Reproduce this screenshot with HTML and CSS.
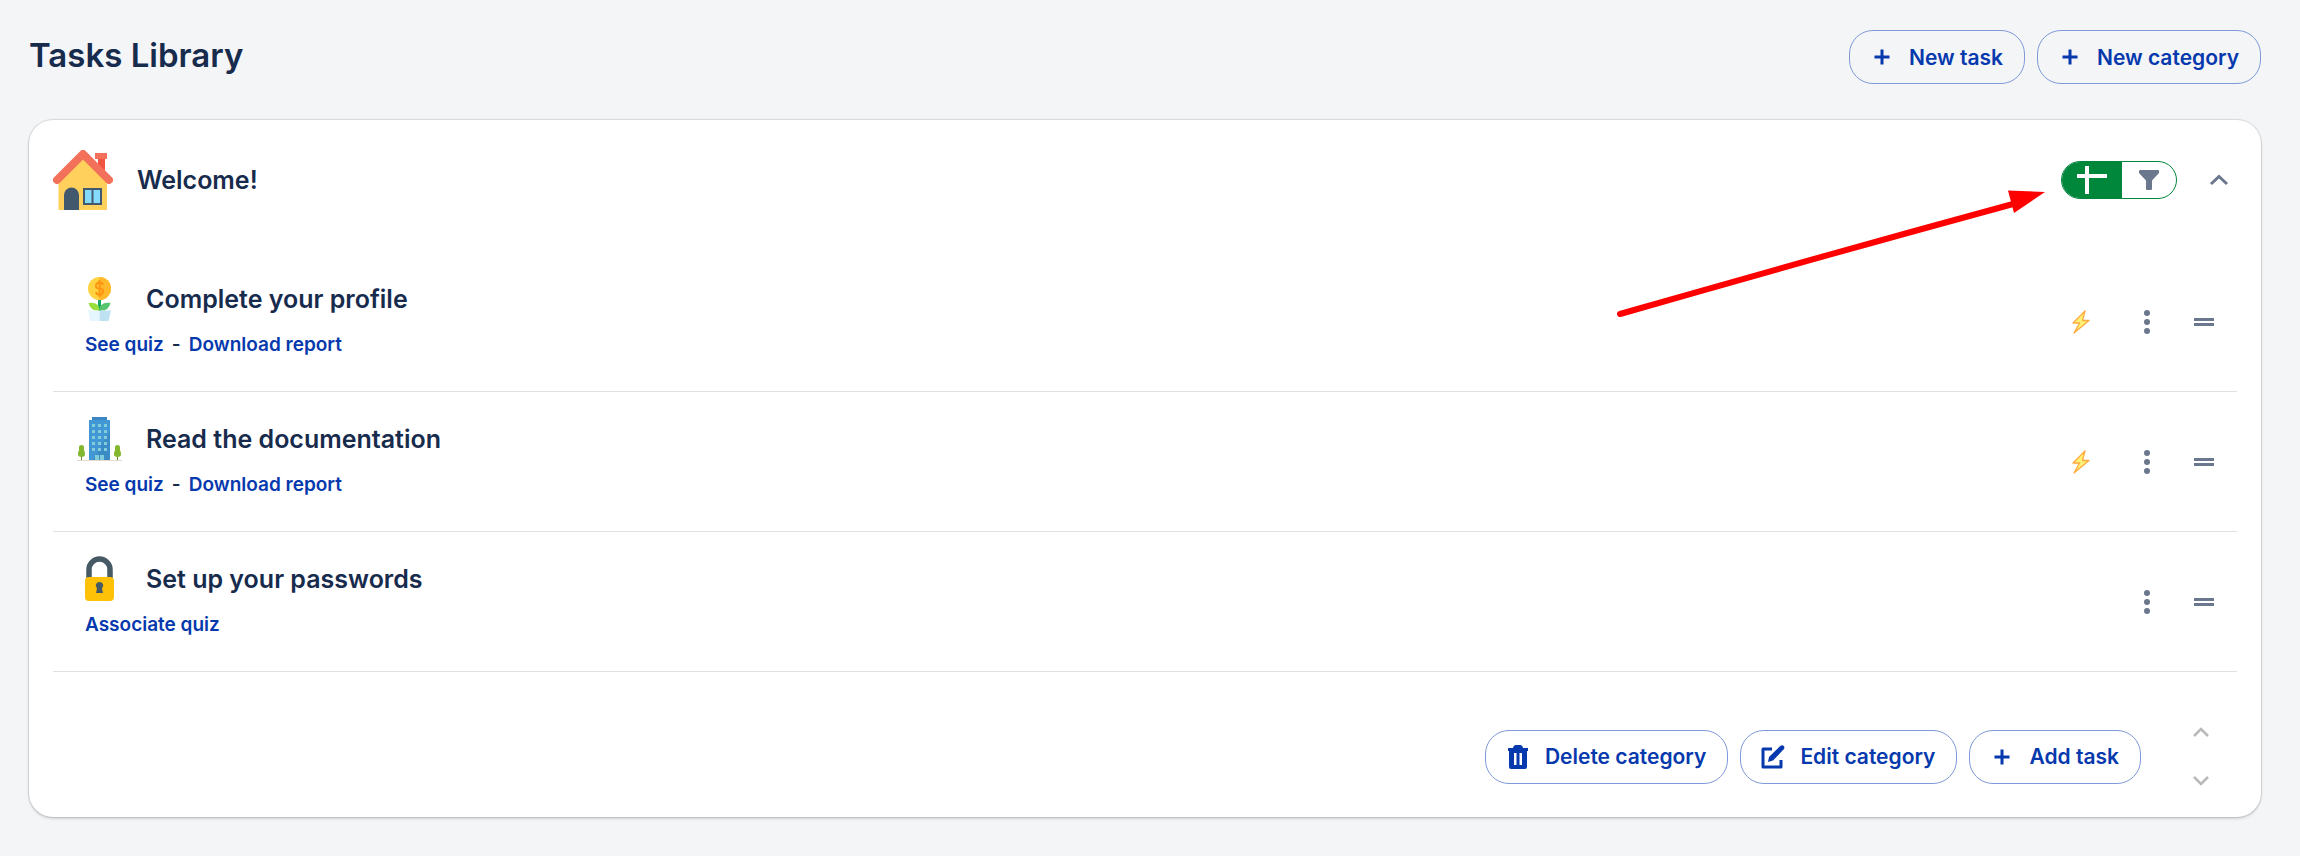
FILE: index.html
```html
<!DOCTYPE html>
<html lang="en">
<head>
    <meta charset="utf-8">
    <title>Tasks Library</title>
    <link rel="stylesheet" href="styles.css">
</head>
<body>
    <header class="page-header">
        <h1>Tasks Library</h1>
        <div class="button-group">
            <button class="btn" type="button">
                <svg width="24" height="24" viewBox="0 0 24 24"><path d="M12 4.5v15M4.5 12h15" fill="none" stroke="currentColor" stroke-width="3"/></svg>
                New task
            </button>
            <button class="btn" type="button">
                <svg width="24" height="24" viewBox="0 0 24 24"><path d="M12 4.5v15M4.5 12h15" fill="none" stroke="currentColor" stroke-width="3"/></svg>
                New category
            </button>
        </div>
    </header>

    <main class="card">
        <div class="category-header">
            <svg class="category-icon" width="60" height="60" viewBox="0 0 60 60">
                <path d="M45 8h7v20l-7-7z" fill="#f05542"/>
                <path d="M42 3h12v6H42z" fill="#f3705a"/>
                <path d="M5.500 30.500L30 8l24 22.500V60H5.500z" fill="#ffd05b"/>
                <path d="M4 30L30 4l26 26" fill="none" stroke="#f3705a" stroke-width="8" stroke-linecap="round" stroke-linejoin="round"/>
                <path d="M11 60V45a7.500 7.500 0 0 1 15 0v15z" fill="#42586d"/>
                <path d="M30 38h19v17H30z" fill="#42586d"/>
                <path d="M32 40h6.500v13H32zM40.500 40H47v13h-6.500z" fill="#84dbff"/>
            </svg>
            <h2>Welcome!</h2>
            <div class="view-toggle" role="group" aria-label="View">
                <button class="toggle-on" type="button" aria-label="Add" aria-pressed="true">
                    <svg width="30" height="28" viewBox="0 0 30 28"><path d="M10 0v28M0 10h30" fill="none" stroke="#fff" stroke-width="4"/></svg>
                </button>
                <button class="toggle-off" type="button" aria-label="Filter" aria-pressed="false">
                    <svg width="20" height="20" viewBox="0 0 20 20"><path d="M1 0h18q1 0 1 1v2l-7 7.500V19q0 1-1 1H8q-1 0-1-1v-8.500L0 3V1q0-1 1-1z" fill="#6b778c"/></svg>
                </button>
            </div>
            <button class="icon-btn collapse" type="button" aria-label="Collapse">
                <svg width="20" height="12" viewBox="0 0 20 12"><path d="M2 10l8-7.500L18 10" fill="none" stroke="currentColor" stroke-width="3"/></svg>
            </button>
        </div>

        <ul class="task-list">
            <li class="task">
                <svg class="task-icon" width="45" height="45" viewBox="0 0 45 45">
                    <path d="M22.500 21v14" stroke="#18a862" stroke-width="3"/>
                    <path d="M11.500 27q11-1.500 11 7.500q-9 1-11-7.500z" fill="#97e03c"/>
                    <path d="M33.500 27q-11-1.500-11 7.500q9 1 11-7.500z" fill="#57c56d"/>
                    <circle cx="22.500" cy="12.500" r="11.500" fill="#ffd341"/>
                    <path d="M22.500 1a11.500 11.500 0 0 1 0 23z" fill="#ffb92b"/>
                    <path d="M26 9q-.5-2.500-3.500-2.500T19 9.500t3.500 3t3.500 3.200-3.500 3.100T19 16M22.500 4v17" fill="none" stroke="#ff9412" stroke-width="2"/>
                    <path d="M11 34.500h11.500V45h-9z" fill="#e5f6fe"/>
                    <path d="M22.500 34.500H34L31.500 45h-9z" fill="#bfe2f3"/>
                </svg>
                <div class="task-info">
                    <h3>Complete your profile</h3>
                    <div class="task-links"><a href="#">See quiz</a><span>-</span><a href="#">Download report</a></div>
                </div>
                <div class="task-actions">
                    <svg class="bolt" width="18" height="24" viewBox="0 0 18 24"><path d="M13 1L1 13h6.500L2 23l15-12.500h-6.500z" fill="#fff176" stroke="#ffab40" stroke-width="1.300" stroke-linejoin="round"/></svg>
                    <button class="icon-btn" type="button" aria-label="More actions">
                        <svg width="6" height="24" viewBox="0 0 6 24" fill="currentColor"><circle cx="3" cy="3" r="3"/><circle cx="3" cy="12" r="3"/><circle cx="3" cy="21" r="3"/></svg>
                    </button>
                    <button class="icon-btn" type="button" aria-label="Reorder">
                        <svg width="20" height="8" viewBox="0 0 20 8" fill="currentColor"><path d="M0 0h20v3H0zM0 5h20v3H0z"/></svg>
                    </button>
                </div>
            </li>
            <li class="task">
                <svg class="task-icon" width="45" height="45" viewBox="0 0 45 45">
                    <path d="M15 1h15v3H15z" fill="#3a87c4"/>
                    <path d="M12 4h21v40H12z" fill="#4298d4"/>
                    <path d="M33 14v30H16z" fill="#3b8cc6"/>
                    <path d="M15 8h3v3h-3zM21 8h3v3h-3zM27 8h3v3h-3zM15 14h3v3h-3zM21 14h3v3h-3zM27 14h3v3h-3zM15 20h3v3h-3zM21 20h3v3h-3zM27 20h3v3h-3zM15 26h3v3h-3zM21 26h3v3h-3zM27 26h3v3h-3zM15 32h3v3h-3zM21 32h3v3h-3zM27 32h3v3h-3zM18 39h4v5h-4zM23 39h4v5h-4z" fill="#83cddb"/>
                    <path d="M4.500 40v4M40.500 40v4" stroke="#668c28" stroke-width="1"/>
                    <path d="M2 31q0-2 2.500-2T7 31v3q3 7-2.500 7T2 34zM38 31q0-2 2.500-2t2.500 2v3q3 7-2.500 7T38 34z" fill="#83b72d"/>
                    <path d="M0 44h45v1H0z" fill="#e5d9cf"/>
                </svg>
                <div class="task-info">
                    <h3>Read the documentation</h3>
                    <div class="task-links"><a href="#">See quiz</a><span>-</span><a href="#">Download report</a></div>
                </div>
                <div class="task-actions">
                    <svg class="bolt" width="18" height="24" viewBox="0 0 18 24"><path d="M13 1L1 13h6.500L2 23l15-12.500h-6.500z" fill="#fff176" stroke="#ffab40" stroke-width="1.300" stroke-linejoin="round"/></svg>
                    <button class="icon-btn" type="button" aria-label="More actions">
                        <svg width="6" height="24" viewBox="0 0 6 24" fill="currentColor"><circle cx="3" cy="3" r="3"/><circle cx="3" cy="12" r="3"/><circle cx="3" cy="21" r="3"/></svg>
                    </button>
                    <button class="icon-btn" type="button" aria-label="Reorder">
                        <svg width="20" height="8" viewBox="0 0 20 8" fill="currentColor"><path d="M0 0h20v3H0zM0 5h20v3H0z"/></svg>
                    </button>
                </div>
            </li>
            <li class="task">
                <svg class="task-icon" width="45" height="45" viewBox="0 0 45 45">
                    <path d="M12 23v-9.500a10.500 10.500 0 0 1 21 0V23" fill="none" stroke="#455a64" stroke-width="5.500"/>
                    <rect x="8" y="21" width="29" height="24" rx="4" fill="#ffc107"/>
                    <path d="M22.500 26a3.700 3.700 0 0 1 2.500 6.500l1 4.500h-7l1-4.500a3.700 3.700 0 0 1 2.500-6.500z" fill="#455a64"/>
                </svg>
                <div class="task-info">
                    <h3>Set up your passwords</h3>
                    <div class="task-links"><a href="#">Associate quiz</a></div>
                </div>
                <div class="task-actions">
                    <button class="icon-btn" type="button" aria-label="More actions">
                        <svg width="6" height="24" viewBox="0 0 6 24" fill="currentColor"><circle cx="3" cy="3" r="3"/><circle cx="3" cy="12" r="3"/><circle cx="3" cy="21" r="3"/></svg>
                    </button>
                    <button class="icon-btn" type="button" aria-label="Reorder">
                        <svg width="20" height="8" viewBox="0 0 20 8" fill="currentColor"><path d="M0 0h20v3H0zM0 5h20v3H0z"/></svg>
                    </button>
                </div>
            </li>
        </ul>

        <footer class="category-footer">
            <div class="button-group">
                <button class="btn" type="button">
                    <svg width="24" height="24" viewBox="0 0 24 24"><path d="M2 3h5q.5-3 3-3h4q2.500 0 3 3h5v3h-1v16q0 2-2 2H5q-2 0-2-2V6H2zM8 8v12h2.500V8zm5.500 0v12H16V8z" fill="currentColor" fill-rule="evenodd"/></svg>
                    Delete category
                </button>
                <button class="btn" type="button">
                    <svg width="24" height="24" viewBox="0 0 24 24"><path d="M11 4H2v18h18v-7" fill="none" stroke="currentColor" stroke-width="3" stroke-linejoin="round"/><path d="M7 17l1-5L19.500.8q1.500-1.300 3 0t.5 3.200L12 15.500z" fill="currentColor"/></svg>
                    Edit category
                </button>
                <button class="btn" type="button">
                    <svg width="24" height="24" viewBox="0 0 24 24"><path d="M12 4.500v15M4.500 12h15" fill="none" stroke="currentColor" stroke-width="3"/></svg>
                    Add task
                </button>
            </div>
            <div class="move-buttons">
                <button class="icon-btn" type="button" aria-label="Move up">
                    <svg width="16" height="10" viewBox="0 0 16 10"><path d="M1 9l7-7 7 7" fill="none" stroke="currentColor" stroke-width="2.500"/></svg>
                </button>
                <button class="icon-btn" type="button" aria-label="Move down">
                    <svg width="16" height="10" viewBox="0 0 16 10"><path d="M1 1l7 7 7-7" fill="none" stroke="currentColor" stroke-width="2.500"/></svg>
                </button>
            </div>
        </footer>

        <svg class="pointer-arrow" width="430" height="130" viewBox="0 0 430 130">
            <path d="M5 126Q200 70 398 16" fill="none" stroke="#f00" stroke-width="6" stroke-linecap="round"/>
            <path d="M393 2.500L430 4l-31 21z" fill="#f00"/>
        </svg>
    </main>
</body>
</html>
```

FILE: styles.css
```css
* {
    box-sizing: border-box;
}
body {
    font-family: Inter, 'Liberation Sans', sans-serif;
    margin: 0;
    padding: 30px 39px 39px 29px;
    background-color: #f4f5f7;
    color: #172b4d;
}
h1, h2, h3 {
    margin: 0;
    font-weight: 600;
}
h1 {
    font-size: 33px;
    line-height: 50px;
}
h2, h3 {
    font-size: 25px;
    line-height: 32px;
}
svg {
    display: block;
    flex-shrink: 0;
}
button {
    font-family: inherit;
    background: none;
    border: none;
    padding: 0;
    cursor: pointer;
}
.page-header {
    display: flex;
    justify-content: space-between;
    margin-bottom: 36px;
}
.button-group {
    display: flex;
    gap: 12px;
}
.btn {
    display: flex;
    align-items: center;
    gap: 15px;
    height: 54px;
    padding: 0 21px 0 20px;
    border: 1px solid #7f9ad9;
    border-radius: 24px;
    color: #0639ad;
    font-size: 21px;
    font-weight: 600;
    white-space: nowrap;
}
.btn:hover {
    background-color: #e9eef9;
}
.icon-btn {
    color: #6b778c;
}
.card {
    position: relative;
    padding: 0 24px;
    background-color: #fff;
    border-radius: 24px;
    box-shadow: 0 0 1px 1px rgba(0, 0, 0, 0.12), 0 2px 3px rgba(0, 0, 0, 0.12);
}
.category-header {
    display: flex;
    align-items: center;
    padding: 30px 8px 42px 0;
}
.category-icon {
    margin-right: 24px;
}
.view-toggle {
    display: flex;
    width: 116px;
    height: 38px;
    margin-left: auto;
    margin-right: 32px;
    border: 1px solid #00873c;
    border-radius: 19px;
    overflow: hidden;
}
.view-toggle button {
    display: flex;
    align-items: center;
    justify-content: center;
    flex: 1;
}
.view-toggle .toggle-on {
    flex: 0 0 60px;
    background-color: #00873c;
}
.task-list {
    list-style: none;
    margin: 0;
    padding: 0;
}
.task {
    display: flex;
    align-items: flex-start;
    height: 140px;
    padding: 24px 23px 24px 24px;
    border-bottom: 1px solid #dfe1e6;
}
.task-info {
    flex: 1;
    padding: 7px 0 0 24px;
}
.task-links {
    display: flex;
    gap: 8px;
    margin: 18px 0 0 -61px;
    font-size: 19px;
    line-height: 24px;
    font-weight: 600;
}
.task-links a {
    color: #0639ad;
    text-decoration: none;
}
.task-links a:hover {
    text-decoration: underline;
}
.task-actions {
    display: flex;
    align-items: center;
    align-self: center;
    gap: 44px;
}
.bolt {
    margin-right: 10px;
}
.category-footer {
    display: flex;
    justify-content: flex-end;
    align-items: center;
    gap: 52px;
    padding: 55px 28px 31px 0;
}
.move-buttons {
    display: flex;
    flex-direction: column;
    gap: 39px;
}
.move-buttons .icon-btn {
    color: #b9b9b9;
}
.pointer-arrow {
    position: absolute;
    top: 68px;
    right: 216px;
    pointer-events: none;
}
```
